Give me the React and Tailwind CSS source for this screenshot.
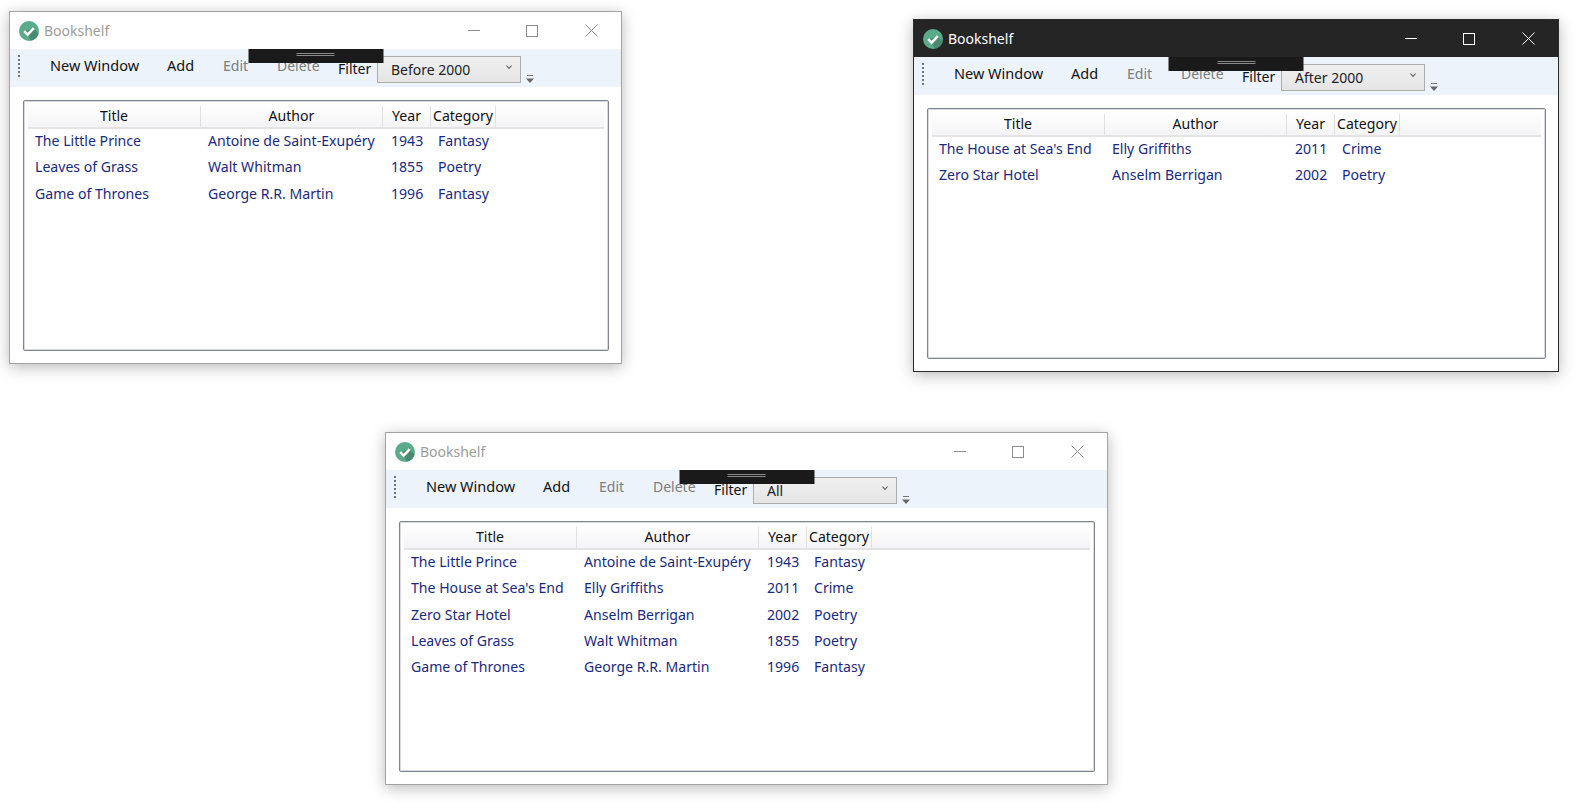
const columns = [
  { title: "Title", width: "w-[173px]", cell: "pl-[7px]" },
  { title: "Author", width: "w-[182px]", cell: "pl-[7px]" },
  { title: "Year", width: "w-[48px]", cell: "pl-[8px]" },
  { title: "Category", width: "w-[65px]", cell: "pl-[7px]" },
];

const littlePrince = ["The Little Prince", "Antoine de Saint-Exupéry", "1943", "Fantasy"];
const seasEnd = ["The House at Sea's End", "Elly Griffiths", "2011", "Crime"];
const zeroStar = ["Zero Star Hotel", "Anselm Berrigan", "2002", "Poetry"];
const leaves = ["Leaves of Grass", "Walt Whitman", "1855", "Poetry"];
const thrones = ["Game of Thrones", "George R.R. Martin", "1996", "Fantasy"];

const AppIcon = () => (
  <svg width="20" height="20" viewBox="0 0 20 20" className="shrink-0">
    <circle cx="10" cy="10" r="10" fill="#59ab8a" />
    <path d="M9 14.5 L5.5 10.5 L14.5 7 L19.5 12.5 A10 10 0 0 1 12 19.8 Z" fill="#4a8a70" />
    <path d="M5.2 10.2 L8.6 13.6 L14.8 7.2" fill="none" stroke="#ffffff" strokeWidth="2.6" />
  </svg>
);

const CaptionButtons = ({ dark }) => {
  const stroke = dark ? "#ffffff" : "#8c8c8c";
  return (
    <div className="ml-auto flex h-full">
      <div className="flex w-[57px] items-center justify-center">
        <svg width="12" height="12" viewBox="0 0 12 12">
          <path d="M0 5.5H12" stroke={stroke} fill="none" />
        </svg>
      </div>
      <div className="flex w-[60px] items-center justify-center">
        <svg width="12" height="12" viewBox="0 0 12 12">
          <rect x="0.5" y="0.5" width="11" height="11" stroke={stroke} fill="none" />
        </svg>
      </div>
      <div className="flex w-[59px] items-center justify-center">
        <svg width="13" height="13" viewBox="0 0 13 13">
          <path d="M0.5 0.5L12.5 12.5M12.5 0.5L0.5 12.5" stroke={stroke} fill="none" />
        </svg>
      </div>
    </div>
  );
};

const Grip = () => (
  <div className="ml-[8px] flex w-[32px] flex-col gap-[2px] self-start pt-[6px]">
    {[0, 1, 2, 3, 4, 5].map((i) => (
      <span key={i} className="h-[2px] w-[2px] bg-[#6f7276]" />
    ))}
  </div>
);

const Combo = ({ value }) => (
  <div className="mt-[7px] flex h-[27px] w-[144px] items-center border border-[#acacac] bg-gradient-to-b from-[#f0f0f0] to-[#e5e5e5] pl-[13px] pr-[8px] text-[#222222]">
    <span>{value}</span>
    <svg width="6" height="5" viewBox="0 0 6 5" className="ml-auto mb-[5px]">
      <path d="M0.5 0.5L3 3.5L5.5 0.5" fill="none" stroke="#555555" strokeWidth="1.1" />
    </svg>
  </div>
);

const Toolbar = ({ filter }) => (
  <div className="relative flex h-[38px] bg-[#ecf3fb] text-[#111111]">
    <Grip />
    <span className="mt-[6px] w-[117px] text-[14.5px]">New Window</span>
    <span className="mt-[6px] w-[56px] text-[14.5px]">Add</span>
    <span className="mt-[7px] w-[54px] text-[#7d7d7d]">Edit</span>
    <span className="mt-[7px] w-[61px] text-[#7d7d7d]">Delete</span>
    <span className="mt-[10px] w-[39px]">Filter</span>
    <Combo value={filter} />
    <svg width="8" height="9" viewBox="0 0 8 9" className="ml-[5px] mt-[26px]">
      <path d="M1 0.5H7" stroke="#777777" fill="none" />
      <path d="M0 3.5H8L4 8Z" fill="#666666" />
    </svg>
    <div className="absolute left-1/2 top-0 flex h-[14px] w-[135px] -translate-x-1/2 justify-center bg-[#1a1a1a] pt-[4px]">
      <div className="h-[3px] w-[38px] border-y border-[#8a8a8a]" />
    </div>
  </div>
);

const BookList = ({ books }) => (
  <div className="h-full rounded-[2px] border border-[#7f8490] px-[4px] pt-[3px] text-[14.1px] shadow-[inset_0_0_0_1px_#d9dbe0]">
    <div className="flex h-[25px] border-b-2 border-[#e3e3e3] bg-gradient-to-b from-white to-[#f4f4f6] pt-[2px] text-[#111111]">
      {columns.map((col) => (
        <div key={col.title} className={`${col.width} border-r border-[#e0e0e0] text-center`}>
          {col.title}
        </div>
      ))}
    </div>
    {books.map((book) => (
      <div key={book[0]} className="flex h-[26.25px] items-center pb-[2px] text-[#1a2a7c]">
        {book.map((text, i) => (
          <div key={i} className={`${columns[i].width} ${columns[i].cell} whitespace-nowrap`}>
            {text}
          </div>
        ))}
      </div>
    ))}
  </div>
);

const BookWindow = ({ place, dark, filter, books }) => (
  <div
    className={`absolute flex h-[353px] flex-col border bg-white shadow-[0_3px_14px_rgba(0,0,0,0.28)] ${place} ${
      dark ? "border-[#2b2b2b]" : "border-[#a3a3a3]"
    }`}
  >
    <div className={`flex h-[37px] items-center pl-[9px] ${dark ? "bg-[#252525] text-white" : "bg-white text-[#9c9c9c]"}`}>
      <AppIcon />
      <span className="ml-[5px]">Bookshelf</span>
      <CaptionButtons dark={dark} />
    </div>
    <Toolbar filter={filter} />
    <div className="min-h-0 flex-1 pb-[12px] pl-[13px] pr-[12px] pt-[13px]">
      <BookList books={books} />
    </div>
  </div>
);

export default function App() {
  return (
    <div className="relative h-screen overflow-hidden bg-white font-['Noto_Sans',sans-serif] text-[14px] leading-[20px]">
      <BookWindow place="left-[9px] top-[11px] w-[613px]" filter="Before 2000" books={[littlePrince, leaves, thrones]} />
      <BookWindow place="left-[913px] top-[19px] w-[646px]" dark filter="After 2000" books={[seasEnd, zeroStar]} />
      <BookWindow
        place="left-[385px] top-[432px] w-[723px]"
        filter="All"
        books={[littlePrince, seasEnd, zeroStar, leaves, thrones]}
      />
    </div>
  );
}
